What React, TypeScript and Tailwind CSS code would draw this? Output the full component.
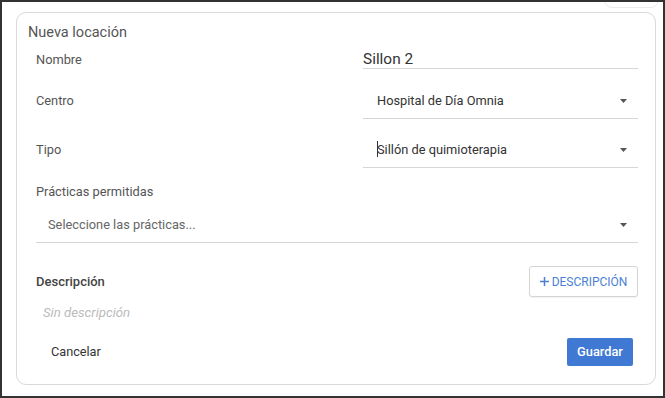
import React from "react";

function Caret() {
  return (
    <svg width="7" height="4" viewBox="0 0 7 4" className="shrink-0">
      <path d="M0 0 L7 0 L3.5 4 Z" fill="#555" />
    </svg>
  );
}

export default function App() {
  return (
    <div
      className="w-[665px] h-[398px] border-2 border-[#333] bg-white relative overflow-hidden"
      style={{ fontFamily: "Roboto, 'Liberation Sans', sans-serif" }}
    >
      <div className="absolute right-[4px] top-[-10px] w-[55px] h-[16px] rounded-[8px] border border-[#ececec]" />
      <div className="ml-[14px] mt-[10px] w-[640px] h-[373px] border border-[#d9d9d9] rounded-[10px] pl-[11px] pr-[17px] pt-[10px]">
        <div className="text-[14.5px] text-[#555] leading-[20px]">Nueva locación</div>

        <div className="flex items-start ml-[8px] mt-[8px] h-[18px]">
          <div className="w-[327px] text-[12.8px] text-[#555] leading-[18px]">Nombre</div>
          <div className="flex-1 h-[18px] border-b border-[#d6d6d6] text-[15.4px] text-[#333] leading-[17px]">
            Sillon 2
          </div>
        </div>

        <div className="flex items-center ml-[8px] mt-[14px] h-[36px]">
          <div className="w-[327px] text-[12.8px] text-[#555] leading-[18px]">Centro</div>
          <div className="flex-1 h-[36px] border-b border-[#d6d6d6] flex items-center pl-[14px] pr-[11px]">
            <span className="flex-1 text-[12.8px] text-[#333]">Hospital de Día Omnia</span>
            <Caret />
          </div>
        </div>

        <div className="flex items-center ml-[8px] mt-[13px] h-[36px]">
          <div className="w-[327px] text-[12.8px] text-[#555] leading-[18px]">Tipo</div>
          <div className="flex-1 h-[36px] border-b border-[#d6d6d6] flex items-center pl-[14px] pr-[11px]">
            <span className="flex-1 text-[12.8px] text-[#333] relative">
              <span className="absolute left-0 top-[1px] w-px h-[16px] bg-[#333]" />
              Sillón de quimioterapia
            </span>
            <Caret />
          </div>
        </div>

        <div className="ml-[8px] mt-[15px] text-[12.8px] text-[#555] leading-[18px]">Prácticas permitidas</div>
        <div className="ml-[8px] mt-[6px] h-[36px] border-b border-[#d6d6d6] flex items-center pl-[12px] pr-[11px]">
          <span className="flex-1 text-[12.8px] text-[#666]">Seleccione las prácticas...</span>
          <Caret />
        </div>

        <div className="ml-[8px] mt-[23px] flex items-center justify-between h-[31px]">
          <span className="text-[13px] font-medium text-[#444]">Descripción</span>
          <button className="h-[31px] w-[109px] border border-[#d4d4d4] rounded-[3px] bg-white flex items-center justify-center gap-[3px] text-[12px] text-[#4a7fd4] shadow-[0_1px_1px_rgba(0,0,0,0.05)]">
            <svg width="9" height="9" viewBox="0 0 9 9">
              <path d="M4.5 0 V9 M0 4.5 H9" stroke="#4a7fd4" strokeWidth="1.5" />
            </svg>
            <span>DESCRIPCIÓN</span>
          </button>
        </div>

        <div className="ml-[15px] mt-[7px] text-[13.2px] italic text-[#bbb] leading-[18px]">Sin descripción</div>

        <div className="mt-[16px] flex items-center justify-between h-[28px]">
          <span className="ml-[23px] text-[12.7px] text-[#333]">Cancelar</span>
          <button className="mr-[5px] h-[28px] w-[66px] rounded-[2px] bg-[#4079d3] text-white text-[12.8px] font-medium">
            Guardar
          </button>
        </div>
      </div>
    </div>
  );
}
